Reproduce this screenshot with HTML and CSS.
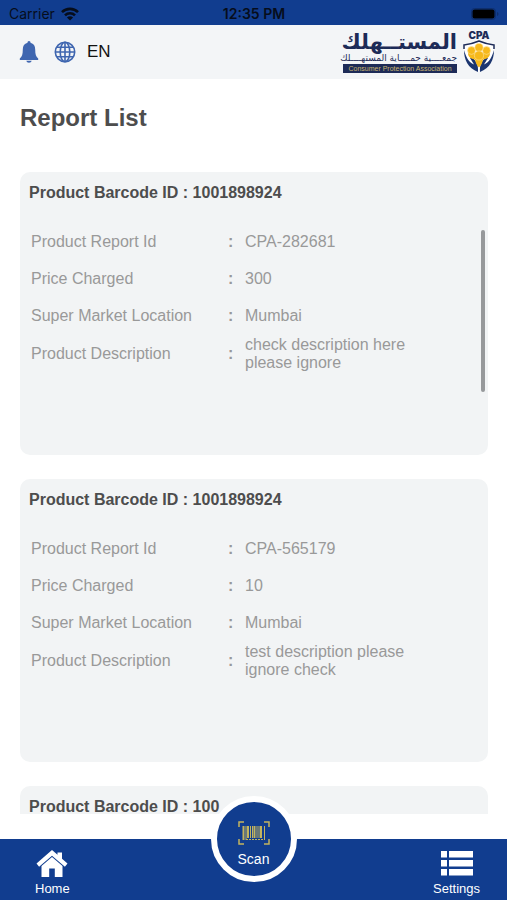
FILE: index.html
```
<!DOCTYPE html>
<html lang="en">
<head>
    <meta charset="UTF-8">
    <meta name="viewport" content="width=device-width, initial-scale=1.0">
    <title>Report List</title>
    <link rel="stylesheet" href="styles.css">
</head>
<body>
    <div class="status-bar">
        <div class="carrier">
            <span>Carrier</span>
            <svg width="18" height="14" viewBox="0 0 18 14" fill="none" stroke="#060d1c" stroke-width="2.6">
                <path d="M1 5.2a11.3 11.3 0 0 1 16 0"/>
                <path d="M4 8.4a7 7 0 0 1 10 0"/>
                <path d="M9 13.6L5.9 10.5a4.4 4.4 0 0 1 6.2 0z" fill="#060d1c" stroke="none"/>
            </svg>
        </div>
        <div class="time">12:35 PM</div>
        <div class="battery">
            <svg width="28" height="12" viewBox="0 0 28 12">
                <rect x="0.5" y="0.5" width="24" height="11" rx="3" fill="none" stroke="#0e2e6c"/>
                <rect x="1.5" y="1.5" width="22" height="9" rx="2" fill="#000"/>
                <path d="M26 4v4q1.5-.5 1.5-2t-1.5-2z" fill="#0e2e6c"/>
            </svg>
        </div>
    </div>

    <header class="header">
        <div class="actions">
            <button class="icon-button" aria-label="Notifications">
                <svg width="20" height="24" viewBox="0 0 20 24" fill="#3f66b0">
                    <path d="M10 1c1 0 1.500.8 1.500 1.800 3.200.8 4.700 3.300 4.700 6.600 0 4.700.8 7.300 3 9.200v1.300H.8v-1.300c2.200-1.900 3-4.500 3-9.200 0-3.300 1.500-5.800 4.700-6.600C8.500 1.800 9 1 10 1z"/>
                    <path d="M7.300 20.700h5.400c-.3 1.300-1.300 2-2.700 2s-2.400-.7-2.700-2z"/>
                </svg>
            </button>
            <button class="language">
                <svg width="22" height="22" viewBox="0 0 22 22" fill="none" stroke="#3f66b0" stroke-width="1.600">
                    <circle cx="11" cy="11" r="9.700"/>
                    <ellipse cx="11" cy="11" rx="4.800" ry="9.700"/>
                    <path d="M11 1.300v19.400M1.300 11h19.400M3 6.300h16M3 15.700h16"/>
                </svg>
                <span>EN</span>
            </button>
        </div>
        <div class="brand">
            <div class="brand-text">
                <div class="brand-name" lang="ar" dir="rtl">المستــهلك</div>
                <div class="brand-arabic" lang="ar" dir="rtl">جمعــــية حمــــاية المستهــــلك</div>
                <div class="brand-english">Consumer Protection Association</div>
            </div>
            <div class="brand-mark">
                <span>CPA</span>
                <svg width="32" height="33" viewBox="0 0 32 33">
                    <path d="M1 5Q9 4 16 1q7 3 15 4 1.500 18-15 27Q-.5 23 1 5z" fill="#fff"/>
                    <path d="M1 9V5Q9 4 16 1q7 3 15 4v4" fill="none" stroke="#1d2b57" stroke-width="1.500"/>
                    <path d="M1 10c0 10 4 18 14 22 .5-7-1.500-11-6-14.500l-2 .5 4 6.500C5.500 22 3 17 1 10z" fill="#1b356f"/>
                    <path d="M31 10c0 10-4 18-14 22-.5-7 1.500-11 6-14.500l2 .5-4 6.500c5.500-2.500 8-7.500 10-14.500z" fill="#1b356f"/>
                    <path d="M5 13q4-2 7 0 4-3 8 0 3-2 7 0c0 5-4 6-7 6.500q-1 5.500-4 8-3-2.500-4-8c-3-.5-7-1.500-7-6.500z" fill="#f6b91c"/>
                    <g fill="#f6b91c" stroke="#fbe3a0" stroke-width=".6">
                        <circle cx="8.500" cy="10.500" r="3.900"/>
                        <circle cx="23.500" cy="10.500" r="3.900"/>
                        <circle cx="16" cy="7.500" r="4.100"/>
                        <circle cx="16" cy="15.500" r="4.600"/>
                    </g>
                </svg>
            </div>
        </div>
    </header>

    <main class="content">
        <h1>Report List</h1>
        <div class="report-list">
            <section class="card">
                <h2>Product Barcode ID : 1001898924</h2>
                <div class="card-body">
                    <table>
                        <tr><th scope="row">Product Report Id</th><td class="colon">:</td><td>CPA-282681</td></tr>
                        <tr><th scope="row">Price Charged</th><td class="colon">:</td><td>300</td></tr>
                        <tr><th scope="row">Super Market Location</th><td class="colon">:</td><td>Mumbai</td></tr>
                        <tr class="description"><th scope="row">Product Description</th><td class="colon">:</td><td>check description here<br>please ignore</td></tr>
                    </table>
                    <div class="scroll-thumb"></div>
                </div>
            </section>

            <section class="card">
                <h2>Product Barcode ID : 1001898924</h2>
                <div class="card-body">
                    <table>
                        <tr><th scope="row">Product Report Id</th><td class="colon">:</td><td>CPA-565179</td></tr>
                        <tr><th scope="row">Price Charged</th><td class="colon">:</td><td>10</td></tr>
                        <tr><th scope="row">Super Market Location</th><td class="colon">:</td><td>Mumbai</td></tr>
                        <tr class="description"><th scope="row">Product Description</th><td class="colon">:</td><td>test description please<br>ignore check</td></tr>
                    </table>
                </div>
            </section>

            <section class="card">
                <h2>Product Barcode ID : 100</h2>
            </section>
        </div>
    </main>

    <nav class="tab-bar">
        <a href="#home" class="tab">
            <svg width="32" height="28" viewBox="0 0 32 28" fill="#fff">
                <path d="M16 0l5.500 4.700V2.500H26v6.200l5.500 4.800-2.600 3.200L16 5.700 3.100 16.700.5 13.500z"/>
                <path d="M16 7l10.500 9V27h-7.700v-8.500h-5.600V27H5.500V16z"/>
            </svg>
            <span>Home</span>
        </a>
        <button class="scan">
            <svg width="32" height="24" viewBox="0 0 32 24" fill="none" stroke="#c3b45f">
                <path d="M1 6V1h5M26 1h5v5M31 18v5h-5M6 23H1v-5" stroke-width="1.500"/>
                <path d="M5.500 5v14M10 5v12M16.500 5v12M23 5v12" stroke-width="2"/>
                <path d="M8 5v14M12.500 5v12M14.500 5v12M19 5v12M21 5v12M26.500 5v14" stroke-width="1"/>
                <path d="M8 18.500h17" stroke-width="1" stroke-dasharray="2 1"/>
            </svg>
            <span>Scan</span>
        </button>
        <a href="#settings" class="tab">
            <svg width="32" height="28" viewBox="0 0 32 28" fill="#fff">
                <path d="M0 1h6v6.500H0zM8 1h24v6.500H8zM0 10h6v6.500H0zM8 10h24v6.500H8zM0 19h6v6.500H0zM8 19h24v6.500H8z"/>
            </svg>
            <span>Settings</span>
        </a>
    </nav>
</body>
</html>
```
FILE: styles.css
```
* {
    box-sizing: border-box;
}

body {
    display: flex;
    flex-direction: column;
    height: 100vh;
    margin: 0;
    background: #ffffff;
    font-family: "Liberation Sans", Arial, sans-serif;
    font-size: 16px;
    line-height: 18px;
    overflow: hidden;
}

button {
    padding: 0;
    border: none;
    background: none;
    font-family: inherit;
    cursor: pointer;
}

svg {
    display: block;
}

.status-bar {
    display: grid;
    grid-template-columns: 1fr auto 1fr;
    align-items: center;
    padding: 2px 8px 0 9px;
    height: 25px;
    background: #113d8f;
    color: #060d1c;
    font-family: Inter, sans-serif;
    font-size: 14px;
}

.carrier {
    display: flex;
    align-items: center;
    gap: 6px;
}

.time {
    font-weight: 600;
}

.battery {
    justify-self: end;
}

.header {
    display: flex;
    align-items: center;
    justify-content: space-between;
    height: 54px;
    padding: 0 12px 0 19px;
    background: #f3f5f7;
}

.actions {
    display: flex;
    align-items: center;
    gap: 15px;
}

.language {
    display: flex;
    align-items: center;
    gap: 11px;
    color: #111111;
    font-size: 17px;
}

.brand {
    display: flex;
    align-items: center;
    gap: 6px;
    color: #1d2b57;
}

.brand-text {
    display: flex;
    flex-direction: column;
    width: 114px;
    white-space: nowrap;
}

.brand-name {
    font-family: "DejaVu Sans", sans-serif;
    font-size: 21px;
    font-weight: bold;
    line-height: 20px;
}

.brand-arabic {
    font-family: "DejaVu Sans", sans-serif;
    font-size: 9px;
    line-height: 12px;
}

.brand-english {
    background: #1d2b57;
    color: #c9b672;
    font-size: 7px;
    line-height: 9px;
    text-align: center;
}

.brand-mark {
    display: flex;
    flex-direction: column;
    align-items: center;
    font-family: Inter, sans-serif;
    font-size: 10px;
    font-weight: 900;
    line-height: 9px;
}

.content {
    display: flex;
    flex: 1;
    flex-direction: column;
    min-height: 0;
    padding: 25px 19px 25px 20px;
}

h1 {
    margin: 0 0 40px;
    color: #4d4d4d;
    font-size: 24px;
    line-height: 28px;
}

.report-list {
    display: flex;
    flex: 1;
    flex-direction: column;
    gap: 24px;
    min-height: 0;
    overflow: hidden;
}

.card {
    flex: none;
    min-height: 283px;
    padding: 12px 3px 0 9px;
    border-radius: 10px;
    background: #f2f4f5;
}

.card h2 {
    margin: 0 0 21px;
    color: #4d4d4d;
    font-size: 16px;
    line-height: 18px;
}

.card-body {
    display: flex;
    align-items: flex-start;
    justify-content: space-between;
}

table {
    border-collapse: collapse;
    color: #999999;
}

th,
td {
    height: 37px;
    padding: 0;
    font-weight: normal;
    text-align: left;
}

.description td,
.description th {
    height: 40px;
}

th {
    width: 199px;
    padding-left: 2px;
}

.colon {
    width: 17px;
    font-weight: bold;
}

.scroll-thumb {
    width: 4px;
    height: 162px;
    margin-top: 7px;
    border-radius: 2px;
    background: #97999b;
}

.tab-bar {
    display: flex;
    position: relative;
    justify-content: space-between;
    height: 61px;
    padding: 11px 27px 0 35px;
    background: #113d8f;
}

.tab {
    display: flex;
    flex-direction: column;
    align-items: center;
    gap: 2px;
    color: #ffffff;
    font-size: 13px;
    text-decoration: none;
}

/* the round button sits over the top edge of the bar */
.scan {
    display: flex;
    position: absolute;
    top: -43px;
    left: 50%;
    flex-direction: column;
    align-items: center;
    justify-content: center;
    gap: 6px;
    width: 86px;
    height: 86px;
    padding-top: 10px;
    border: 6px solid #ffffff;
    border-radius: 50%;
    background: #113d8f;
    color: #ffffff;
    font-size: 14px;
    transform: translateX(-50%);
}
```
